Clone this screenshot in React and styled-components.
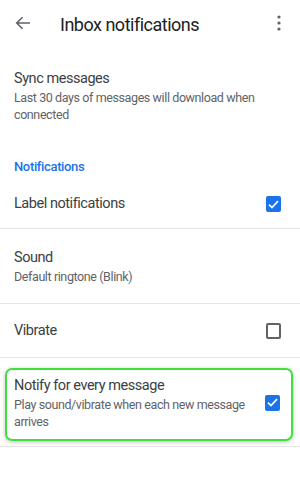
import React from "react";
import styled, { createGlobalStyle } from "styled-components";

const GlobalStyle = createGlobalStyle`
  * { box-sizing: border-box; }
  body {
    margin: 0;
    background: #ffffff;
    font-family: Roboto, "Noto Sans", Arial, sans-serif;
  }
`;

const Screen = styled.div`
  width: 300px;
  height: 500px;
  background: #ffffff;
  overflow: hidden;
`;

const Header = styled.div`
  height: 46px;
  display: flex;
  align-items: center;
  padding: 0 12px 0 14px;
`;

const IconButton = styled.div`
  width: 18px;
  height: 18px;
  display: flex;
  align-items: center;
  justify-content: center;
  color: #5f6368;
`;

const Title = styled.h1`
  flex: 1;
  margin: 2px 0 0 28px;
  font-size: 18px;
  font-weight: 400;
  letter-spacing: -0.5px;
  color: #202124;
  white-space: nowrap;
`;

const Block = styled.div`
  padding: 23px 14px 13px;
`;

const SectionTitle = styled.div`
  padding: 21px 14px 3px;
  font-size: 13px;
  line-height: 20px;
  font-weight: 500;
  letter-spacing: -0.35px;
  color: #1a73e8;
`;

const Row = styled.div`
  min-height: ${({ $h }) => $h}px;
  display: flex;
  align-items: center;
  padding: 0 19px 0 14px;
  border-bottom: 1px solid #e6e6e6;
`;

const HighlightRow = styled.div`
  height: 89px;
  display: flex;
  border-bottom: 1px solid #e6e6e6;
`;

const Highlight = styled.div`
  flex: 1;
  margin: 10px 7px 5px 5px;
  padding: 6px 11px 10px 7px;
  display: flex;
  align-items: center;
  border: 2px solid #3fe03a;
  border-radius: 7px;
  box-shadow: 0 1px 4px rgba(0, 0, 0, 0.25);
`;

const Texts = styled.div`
  flex: 1;
  min-width: 0;
`;

const Primary = styled.div`
  font-size: 14.5px;
  line-height: 20px;
  letter-spacing: -0.45px;
  color: #3c4043;
`;

const Secondary = styled.div`
  font-size: 12.5px;
  line-height: 17px;
  letter-spacing: -0.4px;
  color: #5f6368;
  padding-right: 8px;
`;

const Box = styled.div`
  width: 15px;
  height: 16px;
  border-radius: 2px;
  flex-shrink: 0;
  display: flex;
  align-items: center;
  justify-content: center;
  background: ${({ $checked }) => ($checked ? "#1a73e8" : "transparent")};
  border: ${({ $checked }) => ($checked ? "none" : "2px solid #5f6368")};
`;

const Checkbox = ({ checked }) => (
  <Box $checked={checked}>
    {checked && (
      <svg width="11" height="9" viewBox="0 0 11 9">
        <path d="M1 4.6 L4 7.5 L10 1.2" fill="none" stroke="#fff" strokeWidth="1.7" />
      </svg>
    )}
  </Box>
);

const BackArrow = () => (
  <svg width="16" height="14" viewBox="0 0 16 14">
    <path d="M15 7 H2 M7.5 1.2 L1.7 7 L7.5 12.8" fill="none" stroke="#5f6368" strokeWidth="1.6" />
  </svg>
);

const Kebab = () => (
  <svg width="4" height="16" viewBox="0 0 4 16">
    <circle cx="2" cy="2" r="1.6" fill="#5f6368" />
    <circle cx="2" cy="8" r="1.6" fill="#5f6368" />
    <circle cx="2" cy="14" r="1.6" fill="#5f6368" />
  </svg>
);

export default function App() {
  return (
    <Screen>
      <GlobalStyle />
      <Header>
        <IconButton>
          <BackArrow />
        </IconButton>
        <Title>Inbox notifications</Title>
        <IconButton>
          <Kebab />
        </IconButton>
      </Header>

      <Block>
        <Primary>Sync messages</Primary>
        <Secondary>Last 30 days of messages will download when connected</Secondary>
      </Block>

      <SectionTitle>Notifications</SectionTitle>

      <Row $h={49}>
        <Texts>
          <Primary>Label notifications</Primary>
        </Texts>
        <Checkbox checked />
      </Row>

      <Row $h={75}>
        <Texts>
          <Primary>Sound</Primary>
          <Secondary>Default ringtone (Blink)</Secondary>
        </Texts>
      </Row>

      <Row $h={54}>
        <Texts>
          <Primary>Vibrate</Primary>
        </Texts>
        <Checkbox />
      </Row>

      <HighlightRow>
        <Highlight>
          <Texts>
            <Primary>Notify for every message</Primary>
            <Secondary>Play sound/vibrate when each new message arrives</Secondary>
          </Texts>
          <Checkbox checked />
        </Highlight>
      </HighlightRow>
    </Screen>
  );
}
